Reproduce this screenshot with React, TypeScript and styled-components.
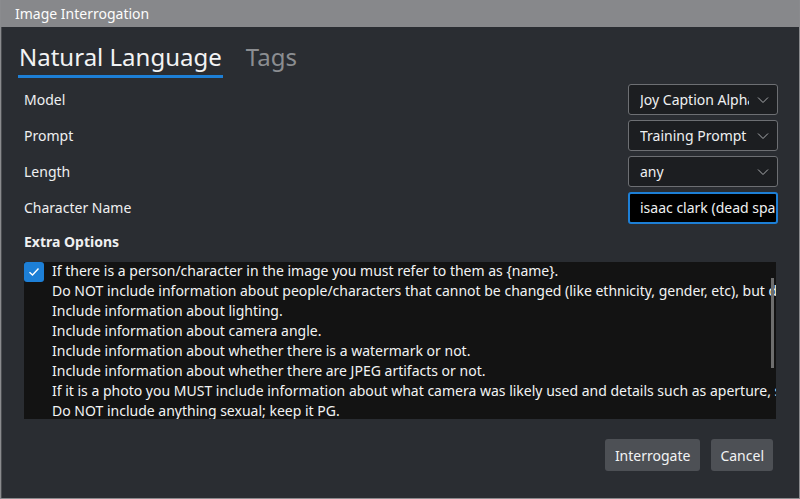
import React from 'react';
import styled, { createGlobalStyle } from 'styled-components';

const GlobalStyle = createGlobalStyle`
  html, body {
    margin: 0;
    padding: 0;
    background: #2a2d32;
  }
  body {
    font-family: "Noto Sans", "DejaVu Sans", sans-serif;
  }
`;

const Window = styled.div`
  width: 800px;
  height: 499px;
  box-sizing: border-box;
  display: flex;
  flex-direction: column;
  border: 1px solid #8a8b8e;
  border-top: none;
  background: #2a2d32;
  color: #eff0f1;
  overflow: hidden;
`;

const TitleBar = styled.div`
  height: 27px;
  flex-shrink: 0;
  background: #87888b;
  color: #fcfcfc;
  font-size: 14px;
  display: flex;
  align-items: center;
  padding-left: 14px;
`;

const Body = styled.div`
  flex: 1;
  display: flex;
  flex-direction: column;
  padding: 13px 21px 0 22px;
  border-left: 1px solid #4a4c50;
`;

const TabBar = styled.div`
  display: flex;
  gap: 22px;
  margin-left: -6px;
`;

const Tab = styled.div<{ $active?: boolean }>`
  font-size: 24px;
  line-height: 34px;
  padding: 0 1px 1px 1px;
  color: ${(p) => (p.$active ? '#f2f3f4' : '#8b8d91')};
  border-bottom: 3px solid ${(p) => (p.$active ? '#1d7fd6' : 'transparent')};
`;

const Form = styled.div`
  display: flex;
  flex-direction: column;
  gap: 5px;
  margin-top: 6px;
`;

const Row = styled.div`
  display: flex;
  align-items: center;
  justify-content: space-between;
  height: 31px;
`;

const Label = styled.span`
  font-size: 14px;
`;

const Combo = styled.div`
  width: 150px;
  height: 31px;
  box-sizing: border-box;
  border: 1px solid #6d6f73;
  border-radius: 3px;
  background: #1c1e21;
  display: flex;
  align-items: center;
  padding: 0 8px 0 11px;
  font-size: 14px;
  gap: 8px;
`;

const ComboText = styled.span`
  flex: 1;
  white-space: nowrap;
  overflow: hidden;
`;

const TextInput = styled.div`
  width: 150px;
  height: 32px;
  box-sizing: border-box;
  border: 2px solid #1d7fd6;
  border-radius: 3px;
  background: #000000;
  display: flex;
  align-items: center;
  padding: 0 0 0 10px;
  font-size: 14px;
  white-space: nowrap;
  overflow: hidden;
`;

const SectionTitle = styled.div`
  font-size: 14px;
  font-weight: 700;
  margin-top: 9px;
`;

const ListBox = styled.div`
  position: relative;
  margin: 11px 2px 0 0;
  height: 157px;
  background: #131313;
  overflow: hidden;
`;

const Item = styled.div`
  display: flex;
  align-items: flex-start;
  gap: 8px;
`;

const Check = styled.div`
  width: 20px;
  height: 20px;
  flex-shrink: 0;
  border-radius: 3px;
  background: #1d7fd6;
  display: flex;
  align-items: center;
  justify-content: center;
`;

const Lines = styled.div`
  font-size: 14px;
  line-height: 20px;
  white-space: pre;
  margin-top: -1px;
  color: #f2f3f4;
`;

const ScrollThumb = styled.div`
  position: absolute;
  right: 2px;
  top: 16px;
  width: 3px;
  height: 90px;
  background: #6e6e6e;
`;

const Footer = styled.div`
  display: flex;
  justify-content: flex-end;
  gap: 11px;
  margin-top: 20px;
  padding-right: 5px;
`;

const Button = styled.button<{ $pad?: number }>`
  height: 32px;
  padding: 0 ${(p) => p.$pad ?? 10}px;
  border: none;
  border-radius: 3px;
  background: #4d5055;
  color: #f2f3f4;
  font-family: "Noto Sans", "DejaVu Sans", sans-serif;
  font-size: 14px;
`;

const Chevron = () => (
  <svg width="12" height="8" viewBox="0 0 12 8">
    <path d="M1 1.5 L6 6.5 L11 1.5" fill="none" stroke="#a9abae" strokeWidth="1" />
  </svg>
);

const options = [
  'If there is a person/character in the image you must refer to them as {name}.',
  'Do NOT include information about people/characters that cannot be changed (like ethnicity, gender, etc), but do still include changeable attributes (like hair style).',
  'Include information about lighting.',
  'Include information about camera angle.',
  'Include information about whether there is a watermark or not.',
  'Include information about whether there are JPEG artifacts or not.',
  'If it is a photo you MUST include information about what camera was likely used and details such as aperture, shutter speed, ISO, etc.',
  'Do NOT include anything sexual; keep it PG.',
];

const App: React.FC = () => {
  return (
    <>
      <GlobalStyle />
      <Window>
        <TitleBar>Image Interrogation</TitleBar>
        <Body>
          <TabBar>
            <Tab $active>Natural Language</Tab>
            <Tab>Tags</Tab>
          </TabBar>
          <Form>
            <Row>
              <Label>Model</Label>
              <Combo>
                <ComboText>Joy Caption Alpha Two</ComboText>
                <Chevron />
              </Combo>
            </Row>
            <Row>
              <Label>Prompt</Label>
              <Combo>
                <ComboText>Training Prompt</ComboText>
                <Chevron />
              </Combo>
            </Row>
            <Row>
              <Label>Length</Label>
              <Combo>
                <ComboText>any</ComboText>
                <Chevron />
              </Combo>
            </Row>
            <Row>
              <Label>Character Name</Label>
              <TextInput>isaac clark (dead space)</TextInput>
            </Row>
          </Form>
          <SectionTitle>Extra Options</SectionTitle>
          <ListBox>
            <Item>
              <Check>
                <svg width="12" height="10" viewBox="0 0 12 10">
                  <path d="M1.5 5.2 L4.5 8 L10.5 1.5" fill="none" stroke="#ffffff" strokeWidth="1.4" />
                </svg>
              </Check>
              <Lines>{options.join('\n')}</Lines>
            </Item>
            <ScrollThumb />
          </ListBox>
          <Footer>
            <Button>Interrogate</Button>
            <Button $pad={9}>Cancel</Button>
          </Footer>
        </Body>
      </Window>
    </>
  );
};

export default App;
